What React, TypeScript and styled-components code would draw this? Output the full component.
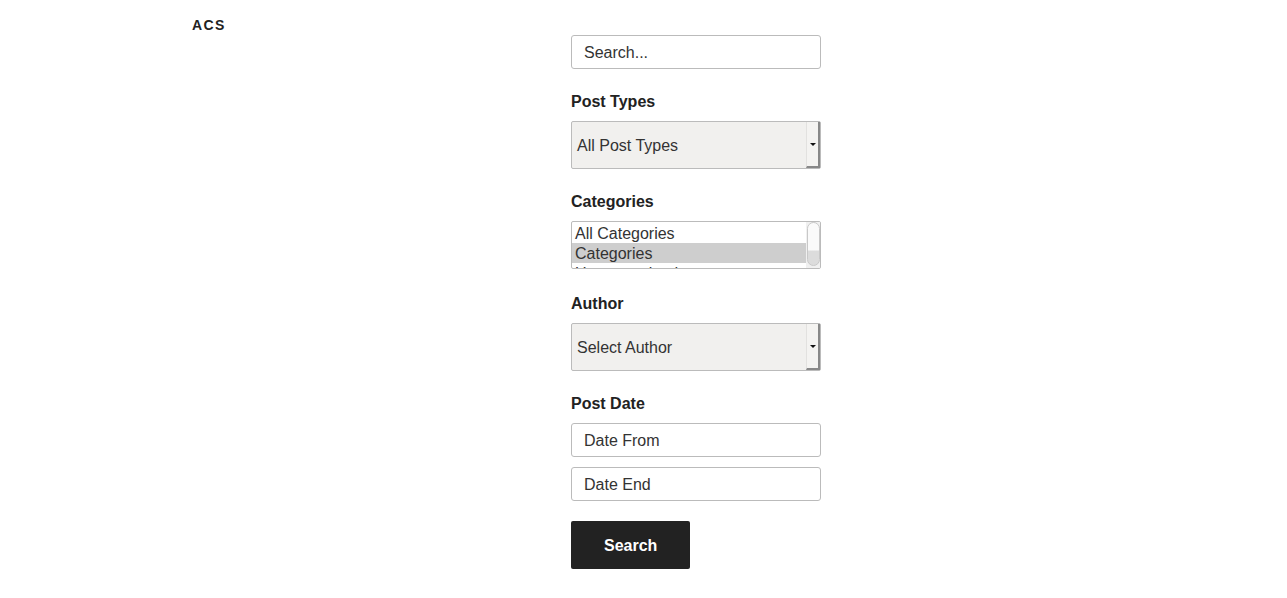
import React from "react";
import styled, { createGlobalStyle } from "styled-components";

const Global = createGlobalStyle`
  html, body { margin: 0; padding: 0; background: #fff; }
  body { font-family: "Liberation Sans", Arial, sans-serif; color: #333; }
  * { box-sizing: border-box; }
`;

const Page = styled.div`
  display: grid;
  grid-template-columns: 379px 250px;
  padding: 14px 0 0 192px;
`;

const Title = styled.h1`
  margin: 0;
  padding-top: 1px;
  font-size: 14px;
  line-height: 21px;
  font-weight: 700;
  letter-spacing: 0.1em;
  text-transform: uppercase;
  color: #222;
`;

const Form = styled.form`
  display: flex;
  flex-direction: column;
  padding-top: 21px;
`;

const Group = styled.div<{ $gap?: number }>`
  display: flex;
  flex-direction: column;
  gap: 10px;
  margin-top: ${(p) => p.$gap ?? 22}px;
`;

const Label = styled.label`
  display: block;
  height: 20px;
  padding-top: 1px;
  font-size: 16px;
  line-height: 20px;
  font-weight: 700;
  color: #222;
`;

const TextInput = styled.div`
  height: 34px;
  border: 1px solid #bbb;
  border-radius: 3px;
  padding: 2px 12px 0;
  display: flex;
  align-items: center;
  font-size: 16px;
  color: #333;
  background: #fff;
`;

const Select = styled.div`
  height: 48px;
  border: 1px solid #bbb;
  border-radius: 2px;
  background: #f1f0ee;
  display: flex;
  align-items: stretch;
`;

const SelectValue = styled.span`
  flex: 1;
  display: flex;
  align-items: center;
  padding: 2px 0 0 5px;
  font-size: 16px;
  color: #333;
`;

const ArrowButton = styled.span`
  width: 14px;
  background: #f4f3f1;
  border-left: 1px solid #e2e1df;
  border-right: 2px solid #888;
  border-bottom: 2px solid #888;
  display: flex;
  align-items: center;
  justify-content: center;
  &::after {
    content: "";
    border-left: 3px solid transparent;
    border-right: 3px solid transparent;
    border-top: 3px solid #111;
    margin-top: 1px;
  }
`;

const ListBox = styled.div`
  height: 48px;
  border: 1px solid #bbb;
  border-radius: 2px;
  background: #fff;
  display: flex;
  overflow: hidden;
`;

const Options = styled.div`
  flex: 1;
  display: flex;
  flex-direction: column;
  padding-top: 1px;
`;

const Option = styled.div<{ $selected?: boolean }>`
  height: 20px;
  line-height: 21px;
  padding-left: 3px;
  font-size: 16px;
  color: #333;
  flex-shrink: 0;
  background: ${(p) => (p.$selected ? "#cecece" : "transparent")};
`;

const ScrollTrack = styled.div`
  width: 14px;
  background: #f0f0f0;
  display: flex;
  flex-direction: column;
  padding: 0 0 0 1px;
`;

const ScrollThumb = styled.div`
  height: 44px;
  border: 1px solid #c8c8c8;
  border-radius: 7px;
  background: linear-gradient(#fafafa 0%, #fafafa 65%, #dcdcdc 66%, #dcdcdc 100%);
`;

const Button = styled.button`
  margin-top: 20px;
  align-self: flex-start;
  height: 48px;
  padding: 2px 33px 0;
  border: 0;
  border-radius: 2px;
  background: #222;
  color: #fff;
  font-family: inherit;
  font-size: 16px;
  font-weight: 700;
`;

export default function App() {
  return (
    <>
      <Global />
      <Page>
        <Title>ACS</Title>
        <Form>
          <TextInput>Search...</TextInput>
          <Group>
            <Label>Post Types</Label>
            <Select>
              <SelectValue>All Post Types</SelectValue>
              <ArrowButton />
            </Select>
          </Group>
          <Group>
            <Label>Categories</Label>
            <ListBox>
              <Options>
                <Option>All Categories</Option>
                <Option $selected>Categories</Option>
                <Option>Uncategorized</Option>
              </Options>
              <ScrollTrack>
                <ScrollThumb />
              </ScrollTrack>
            </ListBox>
          </Group>
          <Group $gap={24}>
            <Label>Author</Label>
            <Select>
              <SelectValue>Select Author</SelectValue>
              <ArrowButton />
            </Select>
          </Group>
          <Group>
            <Label>Post Date</Label>
            <TextInput>Date From</TextInput>
            <TextInput>Date End</TextInput>
          </Group>
          <Button type="button">Search</Button>
        </Form>
      </Page>
    </>
  );
}
